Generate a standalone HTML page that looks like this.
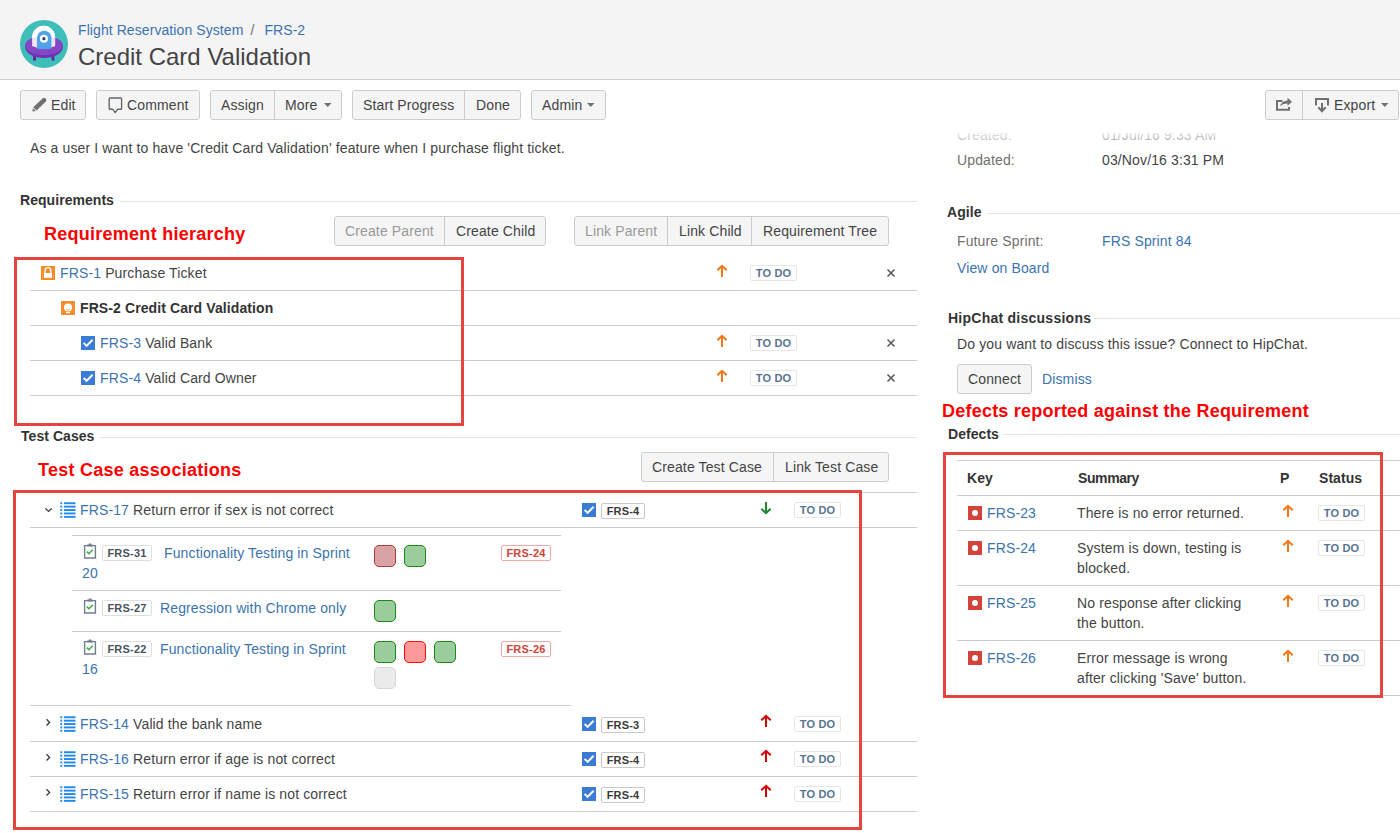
<!DOCTYPE html>
<html><head><meta charset="utf-8">
<style>
*{box-sizing:border-box;margin:0;padding:0}
html,body{width:1400px;height:833px;overflow:hidden;background:#fff}
body{position:relative;font-family:"Liberation Sans",sans-serif;font-size:14px;color:#444}
.a{position:absolute}
.t{position:absolute;white-space:nowrap;line-height:20px;font-size:14px;letter-spacing:0.13px}
.lk{color:#3b73af}
.b{font-weight:bold;letter-spacing:0.05px;color:#333}
.gray{color:#707070}
.hl{position:absolute;height:1px;background:#ccc}
.hd{position:absolute;height:1px;background:#e3e3e3}
.btn{position:absolute;background:#f5f5f5;border:1px solid #ccc;border-radius:3px}
.sep{position:absolute;top:0;bottom:0;width:1px;background:#ccc}
.red{position:absolute;border:3px solid #e6443f}
.ann{position:absolute;white-space:nowrap;font-weight:bold;font-size:18px;line-height:24px;color:#ff0000;letter-spacing:0.26px}
.loz{position:absolute;height:16px;border:1px solid #e4e6ea;border-radius:2px;letter-spacing:0.2px;background:#fff;font-size:11px;font-weight:bold;line-height:14px;color:#587391;text-align:center;white-space:nowrap}
.lz2{position:absolute;height:16px;border:1px solid #dcdfe4;border-radius:2px;letter-spacing:0.2px;background:#fff;font-size:11px;font-weight:bold;line-height:14px;color:#4a5260;text-align:center;white-space:nowrap}
.lzr{position:absolute;height:16px;border:1px solid #f0a8a2;border-radius:2px;letter-spacing:0.2px;background:#fff;font-size:11px;font-weight:bold;line-height:14px;color:#d04437;text-align:center;white-space:nowrap}
.lk2{border-color:#c9c9c9;color:#3a3a3a;letter-spacing:0.15px}
.sq{position:absolute;width:22px;height:22px;border-radius:5px}
.sg{background:#9bcc9b;border:1.5px solid #188a18}
.sr{background:#d9a2a5;border:1.5px solid #b03a3a}
.srb{background:#ff9a9a;border:1.5px solid #ff0a0a}
.sgy{background:#ebebeb;border:1px solid #d6d6d6}
svg{position:absolute;overflow:visible}
</style></head><body>

<!-- CREATED (under toolbar) -->
<div class="t gray" style="left:957px;top:125px">Created:</div>
<div class="t" style="left:1102px;top:125px">01/Jul/16 9:33 AM</div>
<div class="a" style="left:940px;top:79px;width:460px;height:54px;background:#fff"></div>
<div class="a" style="left:940px;top:133px;width:460px;height:8px;background:linear-gradient(rgba(255,255,255,.85),rgba(255,255,255,.55))"></div>
<!-- HEADER -->
<div class="a" style="left:0;top:0;width:1400px;height:80px;background:#f4f4f4;border-bottom:1px solid #ccc"></div>
<svg style="left:20px;top:20px" width="48" height="48" viewBox="0 0 48 48">
  <circle cx="24" cy="24" r="24" fill="#3fbdb8"/>
  <rect x="13" y="34" width="3" height="6.6" fill="#5a29a0"/>
  <rect x="31.6" y="34" width="2.8" height="6.6" fill="#5a29a0"/>
  <ellipse cx="24" cy="27" rx="18.9" ry="11" fill="#6d33b0"/>
  <ellipse cx="24" cy="25.5" rx="18.9" ry="9.6" fill="#8547c6"/>
  <path d="M12.1 26 V17.4 A11.55 11.55 0 0 1 35.2 17.4 V26 Q24 31.6 12.1 26 Z" fill="#fff" opacity="0.85"/>
  <path d="M12.1 17.4 A11.55 11.55 0 0 1 35.2 17.4 V17.6 H12.1 Z" fill="#fff"/>
  <path d="M17 28.5 V17.9 A7.2 7.2 0 0 1 31.4 17.9 V28.5 Q24 30 17 28.5 Z" fill="#4fa2e6"/>
  <circle cx="23.9" cy="18.7" r="4" fill="#fff"/>
  <circle cx="23.9" cy="18.7" r="1.6" fill="#1e3d80"/>
</svg>
<div class="t lk" style="left:78px;top:20px;letter-spacing:0.08px">Flight Reservation System<span style="color:#707070;margin:0 10px 0 7px">/</span>FRS-2</div>
<div class="t" style="left:78px;top:42px;font-size:24px;line-height:30px;letter-spacing:0">Credit Card Validation</div>

<!-- TOOLBAR -->
<div class="btn" style="left:20px;top:90px;width:66px;height:30px"></div>
<div class="t" style="left:51px;top:95px">Edit</div>
<div class="btn" style="left:96px;top:90px;width:104px;height:30px"></div>
<div class="t" style="left:127px;top:95px">Comment</div>
<div class="btn" style="left:210px;top:90px;width:132px;height:30px"><div class="sep" style="left:63px"></div></div>
<div class="t" style="left:221px;top:95px">Assign</div>
<div class="t" style="left:285px;top:95px">More</div>
<div class="btn" style="left:352px;top:90px;width:169px;height:30px"><div class="sep" style="left:111px"></div></div>
<div class="t" style="left:363px;top:95px">Start Progress</div>
<div class="t" style="left:476px;top:95px">Done</div>
<div class="btn" style="left:531px;top:90px;width:75px;height:30px"></div>
<div class="t" style="left:542px;top:95px">Admin</div>
<div class="btn" style="left:1265px;top:90px;width:134px;height:30px"><div class="sep" style="left:36px"></div></div>
<div class="t" style="left:1334px;top:95px">Export</div>

<!-- CONTENT -->
<div class="t" style="left:30px;top:138px">As a user I want to have 'Credit Card Validation' feature when I purchase flight ticket.</div>

<div class="t gray" style="left:957px;top:150px">Updated:</div>
<div class="t" style="left:1102px;top:150px">03/Nov/16 3:31 PM</div>

<div class="t b" style="left:20px;top:190px">Requirements</div>
<div class="hd" style="left:120px;top:201px;width:797px"></div>
<div class="ann" style="left:44px;top:222px">Requirement hierarchy</div>

<div class="btn" style="left:334px;top:216px;width:212px;height:30px"><div class="sep" style="left:109px"></div></div>
<div class="t" style="left:345px;top:221px;color:#999">Create Parent</div>
<div class="t" style="left:456px;top:221px">Create Child</div>
<div class="btn" style="left:574px;top:216px;width:315px;height:30px"><div class="sep" style="left:92px"></div><div class="sep" style="left:176px"></div></div>
<div class="t" style="left:585px;top:221px;color:#999">Link Parent</div>
<div class="t" style="left:679px;top:221px">Link Child</div>
<div class="t" style="left:763px;top:221px">Requirement Tree</div>

<!-- requirement rows -->
<div class="hl" style="left:30px;top:290px;width:887px"></div>
<div class="hl" style="left:30px;top:325px;width:887px"></div>
<div class="hl" style="left:30px;top:360px;width:887px"></div>
<div class="hl" style="left:30px;top:395px;width:887px"></div>

<div class="t" style="left:60px;top:263px"><span class="lk">FRS-1</span> Purchase Ticket</div>
<div class="t b" style="left:80px;top:298px;letter-spacing:0.1px">FRS-2 Credit Card Validation</div>
<div class="t" style="left:100px;top:333px"><span class="lk">FRS-3</span> Valid Bank</div>
<div class="t" style="left:100px;top:368px"><span class="lk">FRS-4</span> Valid Card Owner</div>

<div class="loz" style="left:750px;top:265px;width:47px">TO DO</div>
<div class="loz" style="left:750px;top:335px;width:47px">TO DO</div>
<div class="loz" style="left:750px;top:370px;width:47px">TO DO</div>

<div class="red" style="left:14px;top:257px;width:450px;height:169px"></div>

<!-- TEST CASES -->
<div class="t b" style="left:21px;top:426px">Test Cases</div>
<div class="hd" style="left:100px;top:437px;width:817px"></div>
<div class="ann" style="left:38px;top:458px">Test Case associations</div>
<div class="btn" style="left:641px;top:452px;width:248px;height:30px"><div class="sep" style="left:131px"></div></div>
<div class="t" style="left:652px;top:457px">Create Test Case</div>
<div class="t" style="left:785px;top:457px">Link Test Case</div>

<div class="hl" style="left:30px;top:492px;width:887px"></div>
<div class="hl" style="left:30px;top:527px;width:887px"></div>
<div class="hl" style="left:72px;top:535px;width:489px"></div>
<div class="hl" style="left:72px;top:590px;width:489px"></div>
<div class="hl" style="left:72px;top:631px;width:489px"></div>
<div class="hl" style="left:30px;top:705px;width:541px"></div>
<div class="hl" style="left:30px;top:741px;width:887px"></div>
<div class="hl" style="left:30px;top:776px;width:887px"></div>
<div class="hl" style="left:30px;top:811px;width:887px"></div>

<div class="t" style="left:80px;top:500px"><span class="lk">FRS-17</span> Return error if sex is not correct</div>
<div class="t" style="left:80px;top:714px"><span class="lk">FRS-14</span> Valid the bank name</div>
<div class="t" style="left:80px;top:749px"><span class="lk">FRS-16</span> Return error if age is not correct</div>
<div class="t" style="left:80px;top:784px"><span class="lk">FRS-15</span> Return error if name is not correct</div>

<div class="lz2" style="left:102px;top:545px;width:50px">FRS-31</div>
<div class="t lk" style="left:164px;top:543px">Functionality Testing in Sprint</div>
<div class="t lk" style="left:82px;top:563px">20</div>
<div class="lz2" style="left:102px;top:600px;width:50px">FRS-27</div>
<div class="t lk" style="left:160px;top:598px">Regression with Chrome only</div>
<div class="lz2" style="left:102px;top:641px;width:50px">FRS-22</div>
<div class="t lk" style="left:160px;top:639px">Functionality Testing in Sprint</div>
<div class="t lk" style="left:82px;top:659px">16</div>

<div class="sq sr" style="left:374px;top:545px"></div>
<div class="sq sg" style="left:404px;top:545px"></div>
<div class="lzr" style="left:501px;top:545px;width:50px">FRS-24</div>
<div class="sq sg" style="left:374px;top:600px"></div>
<div class="sq sg" style="left:374px;top:641px"></div>
<div class="sq srb" style="left:404px;top:641px"></div>
<div class="sq sg" style="left:434px;top:641px"></div>
<div class="sq sgy" style="left:374px;top:667px"></div>
<div class="lzr" style="left:501px;top:641px;width:50px">FRS-26</div>

<div class="lz2 lk2" style="left:601px;top:503px;width:44px">FRS-4</div>
<div class="lz2 lk2" style="left:601px;top:717px;width:44px">FRS-3</div>
<div class="lz2 lk2" style="left:601px;top:752px;width:44px">FRS-4</div>
<div class="lz2 lk2" style="left:601px;top:787px;width:44px">FRS-4</div>

<div class="loz" style="left:794px;top:502px;width:47px">TO DO</div>
<div class="loz" style="left:794px;top:716px;width:47px">TO DO</div>
<div class="loz" style="left:794px;top:751px;width:47px">TO DO</div>
<div class="loz" style="left:794px;top:786px;width:47px">TO DO</div>

<div class="red" style="left:13px;top:490px;width:849px;height:340px"></div>

<!-- RIGHT COLUMN -->
<div class="t b" style="left:947px;top:202px">Agile</div>
<div class="hd" style="left:987px;top:213px;width:413px"></div>
<div class="t gray" style="left:957px;top:231px">Future Sprint:</div>
<div class="t lk" style="left:1102px;top:231px">FRS Sprint 84</div>
<div class="t lk" style="left:957px;top:258px">View on Board</div>

<div class="t b" style="left:948px;top:308px;letter-spacing:0.25px">HipChat discussions</div>
<div class="hd" style="left:1094px;top:318px;width:306px"></div>
<div class="t" style="left:957px;top:334px">Do you want to discuss this issue? Connect to HipChat.</div>
<div class="btn" style="left:957px;top:364px;width:75px;height:30px"></div>
<div class="t" style="left:968px;top:369px">Connect</div>
<div class="t lk" style="left:1042px;top:369px">Dismiss</div>

<div class="ann" style="left:942px;top:399px;letter-spacing:0.22px">Defects reported against the Requirement</div>
<div class="t b" style="left:948px;top:424px">Defects</div>
<div class="hd" style="left:1003px;top:434px;width:397px"></div>

<div class="hl" style="left:957px;top:460px;width:443px"></div>
<div class="hl" style="left:957px;top:495px;width:443px"></div>
<div class="hl" style="left:957px;top:530px;width:443px"></div>
<div class="hl" style="left:957px;top:585px;width:443px"></div>
<div class="hl" style="left:957px;top:640px;width:443px"></div>
<div class="hl" style="left:957px;top:695px;width:443px"></div>

<div class="t b" style="left:967px;top:468px">Key</div>
<div class="t b" style="left:1078px;top:468px;letter-spacing:-0.4px">Summary</div>
<div class="t b" style="left:1280px;top:468px">P</div>
<div class="t b" style="left:1319px;top:468px">Status</div>

<div class="t lk" style="left:987px;top:503px">FRS-23</div>
<div class="t" style="left:1077px;top:503px">There is no error returned.</div>
<div class="t lk" style="left:987px;top:538px">FRS-24</div>
<div class="t" style="left:1077px;top:538px">System is down, testing is<br>blocked.</div>
<div class="t lk" style="left:987px;top:593px">FRS-25</div>
<div class="t" style="left:1077px;top:593px">No response after clicking<br>the button.</div>
<div class="t lk" style="left:987px;top:648px">FRS-26</div>
<div class="t" style="left:1077px;top:648px">Error message is wrong<br>after clicking 'Save' button.</div>

<div class="loz" style="left:1318px;top:505px;width:47px">TO DO</div>
<div class="loz" style="left:1318px;top:540px;width:47px">TO DO</div>
<div class="loz" style="left:1318px;top:595px;width:47px">TO DO</div>
<div class="loz" style="left:1318px;top:650px;width:47px">TO DO</div>

<div class="red" style="left:943px;top:452px;width:440px;height:246px"></div>

<!-- ICONS -->
<div id="icons">
<svg style="left:28px;top:93px" width="20" height="20" viewBox="0 0 20 20"><path d="M14.6 5.4 Q16 4 17.4 5.4 L17.8 5.8 Q19 7.2 17.8 8.4 L8.6 17.4 L5.2 14.2 Z" fill="#707070"/><path d="M4.9 14.9 L7.9 17.9 L4.4 18.6 Z" fill="#707070"/></svg>
<svg style="left:104px;top:93px" width="22" height="24" viewBox="0 0 22 24"><path d="M6 5 H16.8 Q17.6 5 17.6 5.8 V15.5 Q17.6 16.3 16.8 16.3 H13.6 L11.2 19.6 L8.8 16.3 H6 Q5.2 16.3 5.2 15.5 V5.8 Q5.2 5 6 5 Z" fill="none" stroke="#666" stroke-width="1.4" stroke-linejoin="round"/></svg>
<svg style="left:324px;top:103px" width="8" height="5" viewBox="0 0 8 5"><path d="M0 0 H7.5 L3.75 4 Z" fill="#707070"/></svg>
<svg style="left:587px;top:103px" width="8" height="5" viewBox="0 0 8 5"><path d="M0 0 H7.5 L3.75 4 Z" fill="#707070"/></svg>
<svg style="left:1381px;top:103px" width="8" height="5" viewBox="0 0 8 5"><path d="M0 0 H7.5 L3.75 4 Z" fill="#707070"/></svg>
<svg style="left:1272px;top:94px" width="24" height="22" viewBox="0 0 24 22"><path d="M10.5 7 H5 V15.8 H17 V13" fill="none" stroke="#707070" stroke-width="2"/><path d="M7.8 12.6 Q9.8 6.6 15.5 6.6 V3.8 L20 7.8 L15.5 11.8 V9.4 Q10.8 9.4 7.8 12.6 Z" fill="#707070"/></svg>
<svg style="left:1310px;top:94px" width="24" height="22" viewBox="0 0 24 22"><path d="M6 11.5 V5 H18 V11.5" fill="none" stroke="#707070" stroke-width="2"/><path d="M12 9 V17" stroke="#707070" stroke-width="2"/><path d="M8.3 13.3 L12 17.2 L15.7 13.3" fill="none" stroke="#707070" stroke-width="2"/></svg>
<svg style="left:41px;top:266px" width="14" height="14" viewBox="0 0 14 14"><rect width="14" height="14" fill="#f58d2a"/><path d="M4 7.2 V4.6 A2.9 2.9 0 0 1 9.8 4.6 V7.2" fill="none" stroke="#fff" stroke-width="1.3"/><rect x="3" y="7" width="8" height="4.9" fill="#fff"/></svg>
<svg style="left:61px;top:301px" width="14" height="14" viewBox="0 0 14 14"><rect width="14" height="14" fill="#f58d2a"/><circle cx="7" cy="6.4" r="4" fill="#fff"/><path d="M5.2 8.4 Q7 10 8.8 8.4" fill="none" stroke="#f58d2a" stroke-width="0.9"/><rect x="5" y="11" width="4" height="1.2" fill="#fff"/></svg>
<svg style="left:81px;top:336px" width="14" height="14" viewBox="0 0 14 14"><rect width="14" height="14" fill="#3a7bd5"/><path d="M2.6 6.9 L5.6 9.9 L11.6 3.8" fill="none" stroke="#fff" stroke-width="2"/></svg>
<svg style="left:81px;top:371px" width="14" height="14" viewBox="0 0 14 14"><rect width="14" height="14" fill="#3a7bd5"/><path d="M2.6 6.9 L5.6 9.9 L11.6 3.8" fill="none" stroke="#fff" stroke-width="2"/></svg>
<svg style="left:582px;top:503px" width="14" height="14" viewBox="0 0 14 14"><rect width="14" height="14" fill="#3a7bd5"/><path d="M2.6 6.9 L5.6 9.9 L11.6 3.8" fill="none" stroke="#fff" stroke-width="2"/></svg>
<svg style="left:582px;top:717px" width="14" height="14" viewBox="0 0 14 14"><rect width="14" height="14" fill="#3a7bd5"/><path d="M2.6 6.9 L5.6 9.9 L11.6 3.8" fill="none" stroke="#fff" stroke-width="2"/></svg>
<svg style="left:582px;top:752px" width="14" height="14" viewBox="0 0 14 14"><rect width="14" height="14" fill="#3a7bd5"/><path d="M2.6 6.9 L5.6 9.9 L11.6 3.8" fill="none" stroke="#fff" stroke-width="2"/></svg>
<svg style="left:582px;top:787px" width="14" height="14" viewBox="0 0 14 14"><rect width="14" height="14" fill="#3a7bd5"/><path d="M2.6 6.9 L5.6 9.9 L11.6 3.8" fill="none" stroke="#fff" stroke-width="2"/></svg>
<svg style="left:716px;top:265px" width="12" height="13" viewBox="0 0 12 13"><path d="M6 1 V12" stroke="#f0771c" stroke-width="2"/><path d="M1.3 5.3 L6 0.8 L10.7 5.3" fill="none" stroke="#f0771c" stroke-width="2"/></svg>
<svg style="left:716px;top:335px" width="12" height="13" viewBox="0 0 12 13"><path d="M6 1 V12" stroke="#f0771c" stroke-width="2"/><path d="M1.3 5.3 L6 0.8 L10.7 5.3" fill="none" stroke="#f0771c" stroke-width="2"/></svg>
<svg style="left:716px;top:370px" width="12" height="13" viewBox="0 0 12 13"><path d="M6 1 V12" stroke="#f0771c" stroke-width="2"/><path d="M1.3 5.3 L6 0.8 L10.7 5.3" fill="none" stroke="#f0771c" stroke-width="2"/></svg>
<svg style="left:760px;top:502px" width="12" height="13" viewBox="0 0 12 13"><path d="M6 0 V11.5" stroke="#1f8a2d" stroke-width="2"/><path d="M1.3 6.7 L6 11.2 L10.7 6.7" fill="none" stroke="#1f8a2d" stroke-width="2"/></svg>
<svg style="left:760px;top:715px" width="12" height="13" viewBox="0 0 12 13"><path d="M6 1 V12" stroke="#d40000" stroke-width="2"/><path d="M1.3 5.3 L6 0.8 L10.7 5.3" fill="none" stroke="#d40000" stroke-width="2"/></svg>
<svg style="left:760px;top:750px" width="12" height="13" viewBox="0 0 12 13"><path d="M6 1 V12" stroke="#d40000" stroke-width="2"/><path d="M1.3 5.3 L6 0.8 L10.7 5.3" fill="none" stroke="#d40000" stroke-width="2"/></svg>
<svg style="left:760px;top:785px" width="12" height="13" viewBox="0 0 12 13"><path d="M6 1 V12" stroke="#d40000" stroke-width="2"/><path d="M1.3 5.3 L6 0.8 L10.7 5.3" fill="none" stroke="#d40000" stroke-width="2"/></svg>
<svg style="left:1282px;top:505px" width="12" height="13" viewBox="0 0 12 13"><path d="M6 1 V12" stroke="#f0771c" stroke-width="2"/><path d="M1.3 5.3 L6 0.8 L10.7 5.3" fill="none" stroke="#f0771c" stroke-width="2"/></svg>
<svg style="left:1282px;top:540px" width="12" height="13" viewBox="0 0 12 13"><path d="M6 1 V12" stroke="#f0771c" stroke-width="2"/><path d="M1.3 5.3 L6 0.8 L10.7 5.3" fill="none" stroke="#f0771c" stroke-width="2"/></svg>
<svg style="left:1282px;top:595px" width="12" height="13" viewBox="0 0 12 13"><path d="M6 1 V12" stroke="#f0771c" stroke-width="2"/><path d="M1.3 5.3 L6 0.8 L10.7 5.3" fill="none" stroke="#f0771c" stroke-width="2"/></svg>
<svg style="left:1282px;top:650px" width="12" height="13" viewBox="0 0 12 13"><path d="M6 1 V12" stroke="#f0771c" stroke-width="2"/><path d="M1.3 5.3 L6 0.8 L10.7 5.3" fill="none" stroke="#f0771c" stroke-width="2"/></svg>
<svg style="left:887px;top:269px" width="8" height="8" viewBox="0 0 8 8"><path d="M0.5 0.5 L7.5 7.5 M7.5 0.5 L0.5 7.5" stroke="#555" stroke-width="1.5"/></svg>
<svg style="left:887px;top:339px" width="8" height="8" viewBox="0 0 8 8"><path d="M0.5 0.5 L7.5 7.5 M7.5 0.5 L0.5 7.5" stroke="#555" stroke-width="1.5"/></svg>
<svg style="left:887px;top:374px" width="8" height="8" viewBox="0 0 8 8"><path d="M0.5 0.5 L7.5 7.5 M7.5 0.5 L0.5 7.5" stroke="#555" stroke-width="1.5"/></svg>
<svg style="left:44px;top:506px" width="9" height="7" viewBox="0 0 9 7"><path d="M1.4 2.4 L4.6 5.4 L7.8 2.4" fill="none" stroke="#333" stroke-width="1.3"/></svg>
<svg style="left:44px;top:718px" width="7" height="9" viewBox="0 0 7 9"><path d="M2.5 1.3 L5.6 4.4 L2.5 7.5" fill="none" stroke="#333" stroke-width="1.3"/></svg>
<svg style="left:44px;top:753px" width="7" height="9" viewBox="0 0 7 9"><path d="M2.5 1.3 L5.6 4.4 L2.5 7.5" fill="none" stroke="#333" stroke-width="1.3"/></svg>
<svg style="left:44px;top:788px" width="7" height="9" viewBox="0 0 7 9"><path d="M2.5 1.3 L5.6 4.4 L2.5 7.5" fill="none" stroke="#333" stroke-width="1.3"/></svg>
<svg style="left:60px;top:501px" width="16" height="16" viewBox="0 0 16 16"><rect x="0.3" y="1.3" width="1.9" height="1.9" fill="#2188f0"/><rect x="3.9" y="1.3" width="11.6" height="1.9" fill="#2188f0"/><rect x="0.3" y="4.7" width="1.9" height="1.9" fill="#2188f0"/><rect x="3.9" y="4.7" width="11.6" height="1.9" fill="#2188f0"/><rect x="0.3" y="8.1" width="1.9" height="1.9" fill="#2188f0"/><rect x="3.9" y="8.1" width="11.6" height="1.9" fill="#2188f0"/><rect x="0.3" y="11.5" width="1.9" height="1.9" fill="#2188f0"/><rect x="3.9" y="11.5" width="11.6" height="1.9" fill="#2188f0"/><rect x="0.3" y="14.9" width="1.9" height="1.9" fill="#2188f0"/><rect x="3.9" y="14.9" width="11.6" height="1.9" fill="#2188f0"/></svg>
<svg style="left:60px;top:715px" width="16" height="16" viewBox="0 0 16 16"><rect x="0.3" y="1.3" width="1.9" height="1.9" fill="#2188f0"/><rect x="3.9" y="1.3" width="11.6" height="1.9" fill="#2188f0"/><rect x="0.3" y="4.7" width="1.9" height="1.9" fill="#2188f0"/><rect x="3.9" y="4.7" width="11.6" height="1.9" fill="#2188f0"/><rect x="0.3" y="8.1" width="1.9" height="1.9" fill="#2188f0"/><rect x="3.9" y="8.1" width="11.6" height="1.9" fill="#2188f0"/><rect x="0.3" y="11.5" width="1.9" height="1.9" fill="#2188f0"/><rect x="3.9" y="11.5" width="11.6" height="1.9" fill="#2188f0"/><rect x="0.3" y="14.9" width="1.9" height="1.9" fill="#2188f0"/><rect x="3.9" y="14.9" width="11.6" height="1.9" fill="#2188f0"/></svg>
<svg style="left:60px;top:750px" width="16" height="16" viewBox="0 0 16 16"><rect x="0.3" y="1.3" width="1.9" height="1.9" fill="#2188f0"/><rect x="3.9" y="1.3" width="11.6" height="1.9" fill="#2188f0"/><rect x="0.3" y="4.7" width="1.9" height="1.9" fill="#2188f0"/><rect x="3.9" y="4.7" width="11.6" height="1.9" fill="#2188f0"/><rect x="0.3" y="8.1" width="1.9" height="1.9" fill="#2188f0"/><rect x="3.9" y="8.1" width="11.6" height="1.9" fill="#2188f0"/><rect x="0.3" y="11.5" width="1.9" height="1.9" fill="#2188f0"/><rect x="3.9" y="11.5" width="11.6" height="1.9" fill="#2188f0"/><rect x="0.3" y="14.9" width="1.9" height="1.9" fill="#2188f0"/><rect x="3.9" y="14.9" width="11.6" height="1.9" fill="#2188f0"/></svg>
<svg style="left:60px;top:785px" width="16" height="16" viewBox="0 0 16 16"><rect x="0.3" y="1.3" width="1.9" height="1.9" fill="#2188f0"/><rect x="3.9" y="1.3" width="11.6" height="1.9" fill="#2188f0"/><rect x="0.3" y="4.7" width="1.9" height="1.9" fill="#2188f0"/><rect x="3.9" y="4.7" width="11.6" height="1.9" fill="#2188f0"/><rect x="0.3" y="8.1" width="1.9" height="1.9" fill="#2188f0"/><rect x="3.9" y="8.1" width="11.6" height="1.9" fill="#2188f0"/><rect x="0.3" y="11.5" width="1.9" height="1.9" fill="#2188f0"/><rect x="3.9" y="11.5" width="11.6" height="1.9" fill="#2188f0"/><rect x="0.3" y="14.9" width="1.9" height="1.9" fill="#2188f0"/><rect x="3.9" y="14.9" width="11.6" height="1.9" fill="#2188f0"/></svg>
<svg style="left:83px;top:543px" width="14" height="16" viewBox="0 0 14 16"><path d="M1.6 2.6 H12.4 V15 H1.6 Z" fill="none" stroke="#707f8f" stroke-width="1.4"/><path d="M4.2 1.6 H5.8 V0.4 H8.2 V1.6 H9.8 V3.6 H4.2 Z" fill="#707f8f"/><path d="M3.8 8.6 L6 10.8 L9.8 6.8" fill="none" stroke="#3cab3c" stroke-width="1.5"/></svg>
<svg style="left:83px;top:598px" width="14" height="16" viewBox="0 0 14 16"><path d="M1.6 2.6 H12.4 V15 H1.6 Z" fill="none" stroke="#707f8f" stroke-width="1.4"/><path d="M4.2 1.6 H5.8 V0.4 H8.2 V1.6 H9.8 V3.6 H4.2 Z" fill="#707f8f"/><path d="M3.8 8.6 L6 10.8 L9.8 6.8" fill="none" stroke="#3cab3c" stroke-width="1.5"/></svg>
<svg style="left:83px;top:639px" width="14" height="16" viewBox="0 0 14 16"><path d="M1.6 2.6 H12.4 V15 H1.6 Z" fill="none" stroke="#707f8f" stroke-width="1.4"/><path d="M4.2 1.6 H5.8 V0.4 H8.2 V1.6 H9.8 V3.6 H4.2 Z" fill="#707f8f"/><path d="M3.8 8.6 L6 10.8 L9.8 6.8" fill="none" stroke="#3cab3c" stroke-width="1.5"/></svg>
<svg style="left:968px;top:506px" width="14" height="14" viewBox="0 0 14 14"><rect width="14" height="14" fill="#d3433a"/><circle cx="7" cy="7" r="3" fill="#fff"/></svg>
<svg style="left:968px;top:541px" width="14" height="14" viewBox="0 0 14 14"><rect width="14" height="14" fill="#d3433a"/><circle cx="7" cy="7" r="3" fill="#fff"/></svg>
<svg style="left:968px;top:596px" width="14" height="14" viewBox="0 0 14 14"><rect width="14" height="14" fill="#d3433a"/><circle cx="7" cy="7" r="3" fill="#fff"/></svg>
<svg style="left:968px;top:651px" width="14" height="14" viewBox="0 0 14 14"><rect width="14" height="14" fill="#d3433a"/><circle cx="7" cy="7" r="3" fill="#fff"/></svg>
</div>
</body></html>
